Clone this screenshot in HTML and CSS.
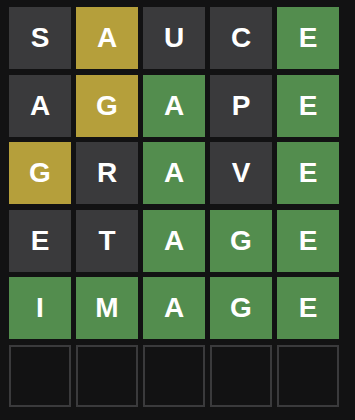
FILE: index.html
```html
<!DOCTYPE html>
<html lang="en">
<head>
  <meta charset="UTF-8" />
  <meta name="viewport" content="width=device-width, initial-scale=1.0" />
  <title>Wordle</title>
  <link rel="stylesheet" href="styles.css">
</head>
<body>
  <div class="board">
    <div class="row">
      <div class="tile absent">S</div>
      <div class="tile present">A</div>
      <div class="tile absent">U</div>
      <div class="tile absent">C</div>
      <div class="tile correct">E</div>
    </div>
    <div class="row">
      <div class="tile absent">A</div>
      <div class="tile present">G</div>
      <div class="tile correct">A</div>
      <div class="tile absent">P</div>
      <div class="tile correct">E</div>
    </div>
    <div class="row">
      <div class="tile present">G</div>
      <div class="tile absent">R</div>
      <div class="tile correct">A</div>
      <div class="tile absent">V</div>
      <div class="tile correct">E</div>
    </div>
    <div class="row">
      <div class="tile absent">E</div>
      <div class="tile absent">T</div>
      <div class="tile correct">A</div>
      <div class="tile correct">G</div>
      <div class="tile correct">E</div>
    </div>
    <div class="row">
      <div class="tile correct">I</div>
      <div class="tile correct">M</div>
      <div class="tile correct">A</div>
      <div class="tile correct">G</div>
      <div class="tile correct">E</div>
    </div>
    <div class="row">
      <div class="tile empty"></div>
      <div class="tile empty"></div>
      <div class="tile empty"></div>
      <div class="tile empty"></div>
      <div class="tile empty"></div>
    </div>
  </div>
</body>
</html>
```

FILE: styles.css
```css
body {
  margin: 0;
  background-color: #121213;
  font-family: 'Liberation Sans', Arial, sans-serif;
  color: #ffffff;
}
.board {
  display: grid;
  grid-template-rows: repeat(6, 62px);
  row-gap: 5.5px;
  padding: 7px 0 0 9px;
}
.row {
  display: grid;
  grid-template-columns: repeat(5, 62px);
  column-gap: 5px;
}
.tile {
  display: flex;
  align-items: center;
  justify-content: center;
  font-size: 28px;
  font-weight: bold;
  text-transform: uppercase;
}
.absent {
  background-color: #3a3a3c;
}
.present {
  background-color: #b59f3b;
}
.correct {
  background-color: #538d4e;
}
.empty {
  border: 2px solid #3a3a3c;
}
```
